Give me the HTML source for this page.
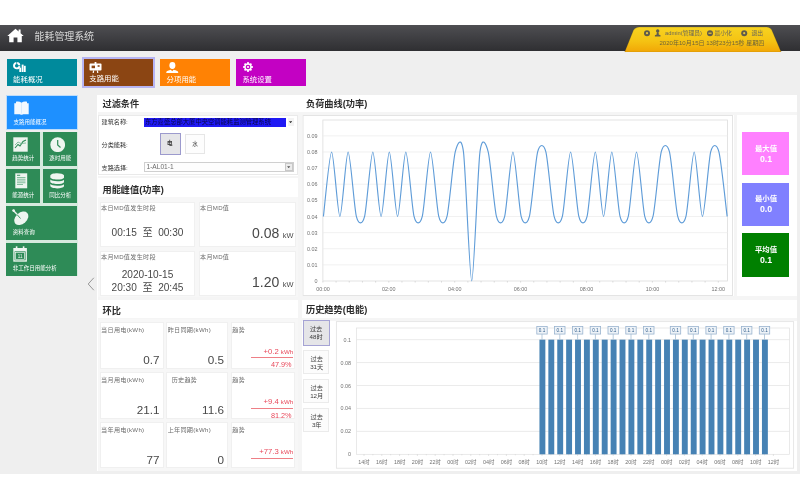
<!DOCTYPE html>
<html lang="zh-CN">
<head>
<meta charset="utf-8">
<title>能耗管理系统</title>
<style>
*{box-sizing:border-box;margin:0;padding:0}
html,body{width:800px;height:500px;overflow:hidden;background:#fff}
body{position:relative;font-family:"Liberation Sans", "Noto Sans CJK SC", sans-serif;color:#333}
.abs,.abs *{position:absolute}
#app{left:0;top:24.5px;width:800px;height:449.6px;background:#efefef;overflow:hidden}
#app,#main{filter:blur(0.35px)}
#hdr{left:0;top:0;width:800px;height:26.8px;background:linear-gradient(#4e4e52,#2f2f32)}
#title{left:34.6px;top:5.9px;font-size:10px;line-height:14px;color:#d8d8d8;white-space:nowrap;letter-spacing:-0.1px}
.tile{color:#fff;overflow:visible}
.tile .lb{white-space:nowrap;font-size:7.4px;line-height:9px;left:6.5px;top:15.4px}
.side .lb{font-size:5.5px;line-height:7px}
#panel{left:97.3px;top:70.1px;width:700px;height:376.4px;background:#fff}
.sect{font-size:9.2px;font-weight:bold;color:#2c2c2c;white-space:nowrap;line-height:12px}
.band{background:#f5f5f5}
.card{background:#fff;border:0.5px solid #f0f0f0}
.clb{font-size:6.1px;letter-spacing:0.3px;color:#6c6c6c;white-space:nowrap;line-height:8px}
.val{white-space:nowrap;color:#484848;text-align:right}
.red{color:#e8485a;white-space:nowrap;text-align:right;font-size:7.7px;line-height:9px}
.flb{font-size:6.15px;color:#333;white-space:nowrap;line-height:8px}
.btn{background:#fcfcfc;border:0.6px solid #ebebeb;font-size:6.2px;line-height:8.2px;color:#3a3a3a;text-align:center}
svg text.ax{font-family:"Liberation Sans", "Noto Sans CJK SC", sans-serif;font-size:5.4px;fill:#727272}
.st{width:48px;text-align:center;color:#fff;font-weight:bold;font-size:7.4px;line-height:10px}
svg text.bl{font-family:"Liberation Sans", "Noto Sans CJK SC", sans-serif;font-size:4.6px;fill:#2c5a88}
</style>
</head>
<body>
<div id="app" class="abs">
  <div id="hdr">
    <svg style="left:6.5px;top:3px" width="17" height="15" viewBox="0 0 17 15"><path d="M8.5 0.8 L0.3 8 L2.2 8 L2.2 14.3 L6.6 14.3 L6.6 9.6 L10.4 9.6 L10.4 14.3 L14.8 14.3 L14.8 8 L16.7 8 L13.6 5.3 L13.6 1.6 L11.6 1.6 L11.6 3.5 Z" fill="#fff"/></svg>
    <div id="title">能耗管理系统</div>
    <svg style="left:620px;top:0" width="180" height="27" viewBox="0 0 180 27">
      <defs><linearGradient id="yg" x1="0" y1="0" x2="0" y2="1"><stop offset="0" stop-color="#f7d321"/><stop offset="0.55" stop-color="#f5c313"/><stop offset="1" stop-color="#f1a606"/></linearGradient></defs>
      <path d="M4.600 27.200 L13.300 5.500 Q15 2 19.500 2 L146.500 2 Q150.500 2 152 5.500 L161.200 27.200 Z" fill="url(#yg)" stroke="#3a3320" stroke-opacity="0.35" stroke-width="0.600"/>
      <g fill="#5f5b4c">
        <circle cx="27" cy="8.200" r="3"/><circle cx="27" cy="8.200" r="1.100" fill="#e9c63a"/>
        <path d="M37.700 4.300 a1.700 1.700 0 1 1 -0.010 0 Z M34.900 11.400 L40.500 11.400 L40.500 10.200 L38.700 9.500 L38.700 7.800 L36.700 7.800 L36.700 9.500 L34.900 10.200 Z"/>
        <circle cx="90" cy="8.200" r="3"/><rect x="88.400" y="7.600" width="3.200" height="1.200" fill="#e9c63a"/>
        <circle cx="124.200" cy="8.200" r="3"/><circle cx="124.200" cy="8.200" r="1.100" fill="#e9c63a"/>
      </g>
    </svg>
    <div style="left:665px;top:4.500px;font-size:5.800px;line-height:8px;color:#6b6657;white-space:nowrap">admin(管理员)</div>
    <div style="left:714.500px;top:4.500px;font-size:5.800px;line-height:8px;color:#6b6657;white-space:nowrap">最小化</div>
    <div style="left:751.500px;top:4.500px;font-size:5.800px;line-height:8px;color:#6b6657;white-space:nowrap">退出</div>
    <div style="left:659.500px;top:14.400px;font-size:6.050px;line-height:8px;color:#6f6338;white-space:nowrap">2020年10月15日 13时23分15秒 星期四</div>
  </div>

  <!-- top tiles -->
  <div class="tile" style="left:6.600px;top:34.700px;width:70.400px;height:27px;background:#008a9c">
    <svg style="left:6.500px;top:2.800px" width="13" height="10.500" viewBox="0 0 13 10.500"><circle cx="3.700" cy="3.700" r="2.700" fill="none" stroke="#fff" stroke-width="1.900"/><path d="M3.700 3.700 L3.700 -0.500 M3.700 3.700 L8 3.700" stroke="#008a9c" stroke-width="0.800"/><rect x="6.300" y="5.600" width="1.900" height="4.700" fill="#fff"/><rect x="8.700" y="2.600" width="1.900" height="7.700" fill="#fff"/><rect x="11" y="3.800" width="1.700" height="6.500" fill="#fff"/></svg>
    <div class="lb">能耗概况</div>
  </div>
  <div class="tile" style="left:81.500px;top:32.200px;width:73.800px;height:31.800px;background:#8b4513;border:2.400px solid #b7b5f3">
    <svg style="left:5.300px;top:3px" width="13" height="11.500" viewBox="0 0 13 11.500"><rect x="0.500" y="1.600" width="12" height="7" rx="0.800" fill="#fff"/><rect x="5.600" y="0" width="1.800" height="2" fill="#fff"/><rect x="2.600" y="3.600" width="3.400" height="2.600" fill="#8b4513"/><rect x="8.600" y="3.200" width="2" height="1.600" fill="#8b4513"/><path d="M4 8.500 L3.600 11.400 L4.800 11.400 L5.200 8.500 Z M7.800 8.500 L8.200 11.400 L9.400 11.400 L9 8.500 Z" fill="#fff"/></svg>
    <div class="lb" style="left:5.800px;top:15.500px">支路用能</div>
  </div>
  <div class="tile" style="left:160.100px;top:34.700px;width:70.200px;height:27px;background:#ff8204">
    <svg style="left:6px;top:2.500px" width="12.500" height="11.500" viewBox="0 0 12.500 11.500"><ellipse cx="6.400" cy="3.500" rx="3" ry="3.400" fill="#fff"/><path d="M0.300 11.300 L0.300 10.300 C0.300 8.800 3 8.300 4.800 7.800 L6.200 9.300 L7.600 7.800 C9.400 8.300 12.200 8.800 12.200 10.300 L12.200 11.300 Z" fill="#fff"/></svg>
    <div class="lb">分项用能</div>
  </div>
  <div class="tile" style="left:236.200px;top:34.700px;width:70.300px;height:27px;background:#c301c3">
    <svg style="left:7.300px;top:3px" width="10" height="10" viewBox="-5 -5 10 10"><g fill="#fff"><circle r="3.700"/><g id="t"><rect x="-0.900" y="-4.900" width="1.800" height="9.800"/></g><use href="#t" transform="rotate(45)"/><use href="#t" transform="rotate(90)"/><use href="#t" transform="rotate(135)"/></g><circle r="2.300" fill="#c301c3"/><circle r="1.100" fill="#fff"/></svg>
    <div class="lb" style="left:6.200px">系统设置</div>
  </div>

  <!-- side tiles -->
  <div class="tile side" style="left:5.500px;top:70.700px;width:72.200px;height:35px;background:#1e90ff;border:0.700px solid #bcdcfb">
    <svg style="left:7.200px;top:5.100px" width="15" height="14" viewBox="0 0 15 14"><path d="M0.300 2.300 L2 2.300 L2 0.800 C4 0.300 6 0.600 7.500 1.800 C9 0.600 11 0.300 13 0.800 L13 2.300 L14.700 2.300 L14.700 13.200 L9 13.200 L8.300 13.800 L6.700 13.800 L6 13.200 L0.300 13.200 Z" fill="#fff" opacity="0.950"/><rect x="7.250" y="2" width="0.500" height="10.500" fill="#bcdcfb"/></svg>
    <div class="lb" style="left:7px;top:23.100px">支路用能概况</div>
  </div>
  <div style="left:5.500px;top:107.300px;width:72.100px;height:144.700px;background:#d6eade"></div>
  <div class="tile side" style="left:6.1px;top:107.8px;width:33.8px;height:33.6px;background:#2e8b57;box-shadow:none"><svg style="left:7.200px;top:4.800px" width="15" height="15" viewBox="0 0 15 15"><rect x="0.300" y="0.300" width="14.400" height="14.400" fill="#eef5f0"/><path d="M2 11 L5 7.500 L7 9 L10 4.500 L13 3" fill="none" stroke="#2e8b57" stroke-width="1.100"/><path d="M2 8 L5 5 L8 6.500 L13 6" fill="none" stroke="#6ab08a" stroke-width="0.800"/></svg><div class="lb" style="left:6.2px;top:22.500px">趋势统计</div></div>
  <div class="tile side" style="left:43.1px;top:107.8px;width:33.9px;height:33.6px;background:#2e8b57;box-shadow:none"><svg style="left:6.700px;top:4.800px" width="15.400" height="15.400" viewBox="0 0 15.400 15.400"><circle cx="7.700" cy="7.700" r="7.400" fill="#eef5f0"/><path d="M7.700 3 L7.700 8 L10.500 10.500" fill="none" stroke="#2e8b57" stroke-width="1.200"/></svg><div class="lb" style="left:6.2px;top:22.500px">逐时用能</div></div>
  <div class="tile side" style="left:6.1px;top:144.7px;width:33.8px;height:33.6px;background:#2e8b57;box-shadow:none"><svg style="left:9px;top:4.300px" width="12.500" height="15.600" viewBox="0 0 12.500 15.600"><rect x="0.300" y="0.300" width="11.900" height="15" fill="#eef5f0"/><rect x="2" y="1.800" width="3.200" height="0.900" fill="#2e8b57"/><g fill="#6ab08a"><rect x="2" y="4" width="8.500" height="0.800"/><rect x="2" y="5.800" width="8.500" height="0.800"/><rect x="2" y="7.600" width="8.500" height="0.800"/><rect x="2" y="9.400" width="8.500" height="0.800"/><rect x="2" y="11.200" width="6" height="0.800"/></g></svg><div class="lb" style="left:6.2px;top:22.500px">能源统计</div></div>
  <div class="tile side" style="left:43.1px;top:144.7px;width:33.9px;height:33.6px;background:#2e8b57;box-shadow:none"><svg style="left:7px;top:4.300px" width="14.400" height="15.600" viewBox="0 0 14.400 15.600"><g fill="#eef5f0"><path d="M0.300 2.800 C0.300 -0.500 14.100 -0.500 14.100 2.800 L14.100 4.300 C14.100 7.300 0.300 7.300 0.300 4.300 Z"/><path d="M0.300 6.600 C2 8.800 12.400 8.800 14.100 6.600 L14.100 8.800 C14.100 11.800 0.300 11.800 0.300 8.800 Z"/><path d="M0.300 11.100 C2 13.300 12.400 13.300 14.100 11.100 L14.100 12.800 C14.100 16.300 0.300 16.300 0.300 12.800 Z"/></g></svg><div class="lb" style="left:6.2px;top:22.500px">同比分析</div></div>
  <div class="tile side" style="left:6.1px;top:181.5px;width:70.9px;height:33.6px;background:#2e8b57;box-shadow:none"><svg style="left:6px;top:3.300px" width="17" height="16.500" viewBox="0 0 17 16.500"><ellipse cx="9.300" cy="9.300" rx="8" ry="5.600" transform="rotate(-42 9.300 9.300)" fill="#eef5f0"/><path d="M1 1 L7.500 8" stroke="#eef5f0" stroke-width="1.400"/><circle cx="1.600" cy="1.600" r="1.300" fill="#eef5f0"/><path d="M5 5.500 L8.500 9.500" stroke="#2e8b57" stroke-width="0.900"/></svg><div class="lb" style="left:6.6px;top:22.500px">资料查询</div></div>
  <div class="tile side" style="left:6.1px;top:218.1px;width:70.9px;height:33.4px;background:#2e8b57;box-shadow:none"><svg style="left:7.200px;top:3.700px" width="14.200" height="16" viewBox="0 0 14.200 16"><path d="M0.300 2 L13.900 2 L13.900 15.700 L0.300 15.700 Z" fill="#eef5f0"/><rect x="1.600" y="5.300" width="11" height="9" fill="#2e8b57"/><rect x="2.600" y="6.300" width="9" height="7" fill="#2e8b57" stroke="#eef5f0" stroke-width="0.700"/><rect x="2.800" y="0.300" width="1.600" height="3.200" fill="#eef5f0"/><rect x="9.800" y="0.300" width="1.600" height="3.200" fill="#eef5f0"/><text x="7.100" y="12" font-size="4.500" text-anchor="middle" fill="#eef5f0" font-family="Liberation Sans, sans-serif">11</text></svg><div class="lb" style="left:6.6px;top:22.500px">非工作日用能分析</div></div>

  <svg style="left:87px;top:252.500px" width="8" height="14" viewBox="0 0 8 14"><path d="M6.800 0.800 L1.200 7 L6.800 13.200" fill="none" stroke="#8d8d8d" stroke-width="0.900"/></svg>

  <div id="panel"></div>
</div>

<!-- main content (page coords) -->
<div class="abs" id="main" style="left:0;top:0;width:800px;height:500px">
  <!-- separator bands -->
  <div class="band" style="left:97.500px;top:111.500px;width:699.500px;height:3px"></div>
  <div class="band" style="left:298.400px;top:111.500px;width:3.500px;height:359.500px"></div>
  <div class="band" style="left:97.500px;top:175.800px;width:200px;height:2.400px"></div>
  <div class="band" style="left:97.500px;top:296px;width:699.500px;height:3.500px"></div>
  <div class="band" style="left:97.500px;top:318.200px;width:699.500px;height:2.600px"></div>
  <div class="band" style="left:97.500px;top:197.300px;width:200px;height:100px;background:#f7f7f7"></div>
  <div class="band" style="left:97.500px;top:319px;width:200px;height:152px;background:#f7f7f7"></div>
  <div class="band" style="left:733.800px;top:114px;width:3.200px;height:183px"></div>

  <div class="sect" style="left:102.500px;top:98px">过滤条件</div>
  <div class="sect" style="left:306px;top:98px">负荷曲线(功率)</div>
  <div class="sect" style="left:102.500px;top:183.500px">用能峰值(功率)</div>
  <div class="sect" style="left:102.500px;top:304.700px">环比</div>
  <div class="sect" style="left:306px;top:304.200px">历史趋势(电能)</div>

  <!-- filter -->
  <div style="left:98.300px;top:114.600px;width:199.600px;height:60.700px;border:0.600px solid #eaeaea;background:#fff"></div>
  <div class="flb" style="left:101.500px;top:118.200px">建筑名称:</div>
  <div style="left:143.500px;top:117.600px;width:142px;height:9px;background:#1f19f4;overflow:hidden"><span style="left:1.500px;top:0.500px;font-size:6.300px;line-height:8px;color:#08084a;white-space:nowrap">东方嘉盛总部大厦中央空调能耗监测管理系统</span></div>
  <div style="left:287.700px;top:118.300px;width:6.300px;height:7.600px;background:#f3f3f3"></div><svg style="left:289.300px;top:120.900px" width="3.200" height="2.400" viewBox="0 0 4 3"><path d="M0 0.300 L4 0.300 L2 2.800 Z" fill="#333"/></svg>
  <div class="flb" style="left:101.500px;top:140.500px">分类能耗:</div>
  <div style="left:159.800px;top:133.200px;width:21.500px;height:21.700px;background:#e5e5e8;border:1.800px solid #9c9acd"><span style="left:0;top:5.600px;width:17.900px;font-weight:bold;text-align:center;font-size:5.600px;line-height:7px;color:#333">电</span></div>
  <div style="left:185px;top:134px;width:19.500px;height:20.300px;background:#fdfdfd;border:0.600px solid #e6e6e6"><span style="left:0;top:5.600px;width:18.300px;text-align:center;font-size:5.600px;line-height:7px;color:#444">水</span></div>
  <div class="flb" style="left:101.500px;top:163.700px">支路选择:</div>
  <div style="left:143.500px;top:161.800px;width:150.700px;height:10.200px;background:#fdfdfd;border:0.700px solid #cfcfcf"><span style="left:2px;top:0.500px;font-size:6.600px;line-height:8px;color:#6a6a6a;white-space:nowrap">1-AL01-1</span>
    <div style="right:0.300px;top:0.400px;width:8px;height:8px;background:#ebebeb;border:0.500px solid #c8c8c8"></div>
    <svg style="right:2.600px;top:3.300px" width="3.400" height="2.400" viewBox="0 0 4 3"><path d="M0 0.300 L4 0.300 L2 2.800 Z" fill="#555"/></svg>
  </div>

  <!-- peak cards -->
  <div class="card" style="left:99.600px;top:201.500px;width:95.800px;height:45.700px"></div>
  <div class="card" style="left:198.500px;top:201.500px;width:97.800px;height:45.700px"></div>
  <div class="card" style="left:99.600px;top:250.500px;width:95.800px;height:45.700px"></div>
  <div class="card" style="left:198.500px;top:250.500px;width:97.800px;height:45.700px"></div>
  <div class="clb" style="left:101px;top:204px">本日MD值发生时段</div>
  <div class="clb" style="left:200px;top:204px">本日MD值</div>
  <div class="clb" style="left:101px;top:253px">本月MD值发生时段</div>
  <div class="clb" style="left:200px;top:253px">本月MD值</div>
  <div class="val" style="left:99.600px;top:227px;width:95.800px;text-align:center;font-size:10.100px;line-height:12px">00:15&nbsp; 至 &nbsp;00:30</div>
  <div class="val" style="left:99.600px;top:269px;width:95.800px;text-align:center;font-size:10.100px;line-height:12px">2020-10-15</div>
  <div class="val" style="left:99.600px;top:281.700px;width:95.800px;text-align:center;font-size:10.100px;line-height:12px">20:30&nbsp; 至 &nbsp;20:45</div>
  <div class="val" style="left:198.500px;top:224.700px;width:95px;font-size:14px;line-height:16px">0.08<span style="position:static;font-size:7.400px;margin-left:1.500px"> kW</span></div>
  <div class="val" style="left:198.500px;top:274px;width:95px;font-size:14px;line-height:16px">1.20<span style="position:static;font-size:7.400px;margin-left:1.500px"> kW</span></div>

  <!-- huanbi cards -->
  <div class="card" style="left:99.8px;top:322.0px;width:64.2px;height:46.7px"></div>
  <div class="clb" style="left:101.1px;top:325.6px">当日用电(kWh)</div>
  <div class="val" style="left:99.8px;top:352.5px;width:59.8px;font-size:11.700px;line-height:13px">0.7</div>
  <div class="card" style="left:166.4px;top:322.0px;width:62.0px;height:46.7px"></div>
  <div class="clb" style="left:167.7px;top:325.6px">昨日同期(kWh)</div>
  <div class="val" style="left:166.4px;top:352.5px;width:57.6px;font-size:11.700px;line-height:13px">0.5</div>
  <div class="card" style="left:231.0px;top:322.0px;width:64.4px;height:46.7px"></div>
  <div class="clb" style="left:232.3px;top:325.6px">趋势</div>
  <div class="red" style="left:231.0px;top:347.0px;width:62.2px">+0.2 <span style="position:static;font-size:6.200px">kWh</span></div>
  <div style="left:250.9px;top:357.3px;width:42.500px;height:0.600px;background:#ee7f86"></div>
  <div class="red" style="font-size:7.3px;left:231.0px;top:360.3px;width:60.6px">47.9%</div>
  <div class="card" style="left:99.8px;top:372.3px;width:64.2px;height:46.9px"></div>
  <div class="clb" style="left:101.1px;top:375.9px">当月用电(kWh)</div>
  <div class="val" style="left:99.8px;top:402.8px;width:59.8px;font-size:11.700px;line-height:13px">21.1</div>
  <div class="card" style="left:166.4px;top:372.3px;width:62.0px;height:46.9px"></div>
  <div class="clb" style="left:167.7px;top:375.9px">&nbsp;&nbsp;历史趋势</div>
  <div class="val" style="left:166.4px;top:402.8px;width:57.6px;font-size:11.700px;line-height:13px">11.6</div>
  <div class="card" style="left:231.0px;top:372.3px;width:64.4px;height:46.9px"></div>
  <div class="clb" style="left:232.3px;top:375.9px">趋势</div>
  <div class="red" style="left:231.0px;top:397.3px;width:62.2px">+9.4 <span style="position:static;font-size:6.200px">kWh</span></div>
  <div style="left:250.9px;top:407.6px;width:42.500px;height:0.600px;background:#ee7f86"></div>
  <div class="red" style="font-size:7.3px;left:231.0px;top:410.6px;width:60.6px">81.2%</div>
  <div class="card" style="left:99.8px;top:422.4px;width:64.2px;height:45.6px"></div>
  <div class="clb" style="left:101.1px;top:426.0px">当年用电(kWh)</div>
  <div class="val" style="left:99.8px;top:452.9px;width:59.8px;font-size:11.700px;line-height:13px">77</div>
  <div class="card" style="left:166.4px;top:422.4px;width:62.0px;height:45.6px"></div>
  <div class="clb" style="left:167.7px;top:426.0px">上年同期(kWh)</div>
  <div class="val" style="left:166.4px;top:452.9px;width:57.6px;font-size:11.700px;line-height:13px">0</div>
  <div class="card" style="left:231.0px;top:422.4px;width:64.4px;height:45.6px"></div>
  <div class="clb" style="left:232.3px;top:426.0px">趋势</div>
  <div class="red" style="left:231.0px;top:447.4px;width:62.2px">+77.3 <span style="position:static;font-size:6.200px">kWh</span></div>
  <div style="left:250.9px;top:457.7px;width:42.500px;height:0.600px;background:#ee7f86"></div>

  <!-- right stat boxes -->
  <div style="left:741.600px;top:132.400px;width:47.800px;height:42.700px;background:#ff80ff"></div>
  <div style="left:741.600px;top:183px;width:47.800px;height:43px;background:#8080ff"></div>
  <div style="left:741.600px;top:233.200px;width:47.800px;height:43.400px;background:#008000"></div>
  <div class="st" style="left:742px;top:143.500px">最大值<br><span style="position:static;font-size:8.800px">0.1</span></div>
  <div class="st" style="left:742px;top:194.200px">最小值<br><span style="position:static;font-size:8.800px">0.0</span></div>
  <div class="st" style="left:742px;top:244.700px">平均值<br><span style="position:static;font-size:8.800px">0.1</span></div>

  <!-- period buttons -->
  <div class="btn" style="left:302.800px;top:320.300px;width:27.300px;height:26px;background:#e5e5e8;border:1.300px solid #a5a3d4"><span style="left:0;top:3.700px;width:24.600px">过去<br>48时</span></div>
  <div class="btn" style="left:303.300px;top:349.500px;width:26px;height:24.500px"><span style="left:0;top:4px;width:24.800px">过去<br>31天</span></div>
  <div class="btn" style="left:303.300px;top:378.800px;width:26px;height:24.500px"><span style="left:0;top:4px;width:24.800px">过去<br>12月</span></div>
  <div class="btn" style="left:303.300px;top:407.500px;width:26px;height:24.500px"><span style="left:0;top:4px;width:24.800px">过去<br>3年</span></div>

  <svg style="left:0;top:0" width="800" height="500" viewBox="0 0 800 500">
<rect x="303" y="115.5" width="429.5" height="180" fill="#fff" stroke="#e4e4e4" stroke-width="1"/>
<rect x="322.9" y="120.0" width="404.7" height="161.0" fill="#fff" stroke="#dcdcdc" stroke-width="0.8"/>
<line x1="322.9" y1="264.87" x2="727.6" y2="264.87" stroke="#ebebeb" stroke-width="0.7"/>
<text x="317.6" y="266.97" text-anchor="end" class="ax">0.01</text>
<line x1="322.9" y1="248.74" x2="727.6" y2="248.74" stroke="#ebebeb" stroke-width="0.7"/>
<text x="317.6" y="250.84" text-anchor="end" class="ax">0.02</text>
<line x1="322.9" y1="232.61" x2="727.6" y2="232.61" stroke="#ebebeb" stroke-width="0.7"/>
<text x="317.6" y="234.71" text-anchor="end" class="ax">0.03</text>
<line x1="322.9" y1="216.48" x2="727.6" y2="216.48" stroke="#ebebeb" stroke-width="0.7"/>
<text x="317.6" y="218.58" text-anchor="end" class="ax">0.04</text>
<line x1="322.9" y1="200.35" x2="727.6" y2="200.35" stroke="#ebebeb" stroke-width="0.7"/>
<text x="317.6" y="202.45" text-anchor="end" class="ax">0.05</text>
<line x1="322.9" y1="184.22" x2="727.6" y2="184.22" stroke="#ebebeb" stroke-width="0.7"/>
<text x="317.6" y="186.32" text-anchor="end" class="ax">0.06</text>
<line x1="322.9" y1="168.09" x2="727.6" y2="168.09" stroke="#ebebeb" stroke-width="0.7"/>
<text x="317.6" y="170.19" text-anchor="end" class="ax">0.07</text>
<line x1="322.9" y1="151.96" x2="727.6" y2="151.96" stroke="#ebebeb" stroke-width="0.7"/>
<text x="317.6" y="154.06" text-anchor="end" class="ax">0.08</text>
<line x1="322.9" y1="135.83" x2="727.6" y2="135.83" stroke="#ebebeb" stroke-width="0.7"/>
<text x="317.6" y="137.93" text-anchor="end" class="ax">0.09</text>
<text x="317.6" y="283.10" text-anchor="end" class="ax">0</text>
<line x1="322.90" y1="281.0" x2="322.90" y2="282.6" stroke="#c8c8c8" stroke-width="0.6"/>
<line x1="336.08" y1="281.0" x2="336.08" y2="282.6" stroke="#c8c8c8" stroke-width="0.6"/>
<line x1="349.26" y1="281.0" x2="349.26" y2="282.6" stroke="#c8c8c8" stroke-width="0.6"/>
<line x1="362.44" y1="281.0" x2="362.44" y2="282.6" stroke="#c8c8c8" stroke-width="0.6"/>
<line x1="375.62" y1="281.0" x2="375.62" y2="282.6" stroke="#c8c8c8" stroke-width="0.6"/>
<line x1="388.80" y1="281.0" x2="388.80" y2="282.6" stroke="#c8c8c8" stroke-width="0.6"/>
<line x1="401.98" y1="281.0" x2="401.98" y2="282.6" stroke="#c8c8c8" stroke-width="0.6"/>
<line x1="415.16" y1="281.0" x2="415.16" y2="282.6" stroke="#c8c8c8" stroke-width="0.6"/>
<line x1="428.34" y1="281.0" x2="428.34" y2="282.6" stroke="#c8c8c8" stroke-width="0.6"/>
<line x1="441.52" y1="281.0" x2="441.52" y2="282.6" stroke="#c8c8c8" stroke-width="0.6"/>
<line x1="454.70" y1="281.0" x2="454.70" y2="282.6" stroke="#c8c8c8" stroke-width="0.6"/>
<line x1="467.88" y1="281.0" x2="467.88" y2="282.6" stroke="#c8c8c8" stroke-width="0.6"/>
<line x1="481.06" y1="281.0" x2="481.06" y2="282.6" stroke="#c8c8c8" stroke-width="0.6"/>
<line x1="494.24" y1="281.0" x2="494.24" y2="282.6" stroke="#c8c8c8" stroke-width="0.6"/>
<line x1="507.42" y1="281.0" x2="507.42" y2="282.6" stroke="#c8c8c8" stroke-width="0.6"/>
<line x1="520.60" y1="281.0" x2="520.60" y2="282.6" stroke="#c8c8c8" stroke-width="0.6"/>
<line x1="533.78" y1="281.0" x2="533.78" y2="282.6" stroke="#c8c8c8" stroke-width="0.6"/>
<line x1="546.96" y1="281.0" x2="546.96" y2="282.6" stroke="#c8c8c8" stroke-width="0.6"/>
<line x1="560.14" y1="281.0" x2="560.14" y2="282.6" stroke="#c8c8c8" stroke-width="0.6"/>
<line x1="573.32" y1="281.0" x2="573.32" y2="282.6" stroke="#c8c8c8" stroke-width="0.6"/>
<line x1="586.50" y1="281.0" x2="586.50" y2="282.6" stroke="#c8c8c8" stroke-width="0.6"/>
<line x1="599.68" y1="281.0" x2="599.68" y2="282.6" stroke="#c8c8c8" stroke-width="0.6"/>
<line x1="612.86" y1="281.0" x2="612.86" y2="282.6" stroke="#c8c8c8" stroke-width="0.6"/>
<line x1="626.04" y1="281.0" x2="626.04" y2="282.6" stroke="#c8c8c8" stroke-width="0.6"/>
<line x1="639.22" y1="281.0" x2="639.22" y2="282.6" stroke="#c8c8c8" stroke-width="0.6"/>
<line x1="652.40" y1="281.0" x2="652.40" y2="282.6" stroke="#c8c8c8" stroke-width="0.6"/>
<line x1="665.58" y1="281.0" x2="665.58" y2="282.6" stroke="#c8c8c8" stroke-width="0.6"/>
<line x1="678.76" y1="281.0" x2="678.76" y2="282.6" stroke="#c8c8c8" stroke-width="0.6"/>
<line x1="691.94" y1="281.0" x2="691.94" y2="282.6" stroke="#c8c8c8" stroke-width="0.6"/>
<line x1="705.12" y1="281.0" x2="705.12" y2="282.6" stroke="#c8c8c8" stroke-width="0.6"/>
<line x1="718.30" y1="281.0" x2="718.30" y2="282.6" stroke="#c8c8c8" stroke-width="0.6"/>
<text x="322.90" y="291" text-anchor="middle" class="ax">00:00</text>
<text x="388.80" y="291" text-anchor="middle" class="ax">02:00</text>
<text x="454.70" y="291" text-anchor="middle" class="ax">04:00</text>
<text x="520.60" y="291" text-anchor="middle" class="ax">06:00</text>
<text x="586.50" y="291" text-anchor="middle" class="ax">08:00</text>
<text x="652.40" y="291" text-anchor="middle" class="ax">10:00</text>
<text x="718.30" y="291" text-anchor="middle" class="ax">12:00</text>
<path d="M323.40,216.48 C324.50,207.88 329.44,151.96 331.64,151.96 C333.84,151.96 337.68,216.48 339.88,216.48 C342.08,216.48 345.92,151.96 348.12,151.96 C350.32,151.96 354.16,207.88 356.36,216.48 C358.56,225.08 362.40,225.08 364.60,216.48 C366.80,207.88 370.64,151.96 372.84,151.96 C375.04,151.96 378.88,216.48 381.08,216.48 C383.28,216.48 387.12,151.96 389.32,151.96 C391.52,151.96 395.36,216.48 397.56,216.48 C399.76,216.48 403.60,151.96 405.80,151.96 C408.00,151.96 411.84,207.88 414.04,216.48 C416.24,225.08 420.08,225.08 422.28,216.48 C424.48,207.88 428.32,151.96 430.52,151.96 C432.72,151.96 436.56,207.88 438.76,216.48 C440.96,225.08 444.80,225.08 447.00,216.48 C449.20,207.88 453.04,160.56 455.24,151.96 C457.44,143.36 461.28,134.75 463.48,151.96 C465.68,169.17 469.52,281.00 471.72,281.00 C473.92,281.00 477.76,169.17 479.96,151.96 C482.16,134.75 486.00,143.36 488.20,151.96 C490.40,160.56 494.24,207.88 496.44,216.48 C498.64,225.08 502.48,225.08 504.68,216.48 C506.88,207.88 510.72,151.96 512.92,151.96 C515.12,151.96 518.96,207.88 521.16,216.48 C523.36,225.08 527.20,225.08 529.40,216.48 C531.60,207.88 535.44,160.56 537.64,151.96 C539.84,143.36 543.68,143.36 545.88,151.96 C548.08,160.56 551.92,207.88 554.12,216.48 C556.32,225.08 560.16,225.08 562.36,216.48 C564.56,207.88 568.40,151.96 570.60,151.96 C572.80,151.96 576.64,207.88 578.84,216.48 C581.04,225.08 584.88,225.08 587.08,216.48 C589.28,207.88 593.12,151.96 595.32,151.96 C597.52,151.96 601.36,216.48 603.56,216.48 C605.76,216.48 609.60,151.96 611.80,151.96 C614.00,151.96 617.84,207.88 620.04,216.48 C622.24,225.08 626.08,225.08 628.28,216.48 C630.48,207.88 634.32,151.96 636.52,151.96 C638.72,151.96 642.56,207.88 644.76,216.48 C646.96,225.08 650.80,225.08 653.00,216.48 C655.20,207.88 659.04,160.56 661.24,151.96 C663.44,143.36 667.28,143.36 669.48,151.96 C671.68,160.56 675.52,207.88 677.72,216.48 C679.92,225.08 683.76,225.08 685.96,216.48 C688.16,207.88 692.00,151.96 694.20,151.96 C696.40,151.96 700.24,216.48 702.44,216.48 C704.64,216.48 708.48,160.56 710.68,151.96 C712.88,143.36 716.72,143.36 718.92,151.96 C721.12,160.56 726.06,207.88 727.16,216.48" fill="none" stroke="#5f9cd8" stroke-width="1.15" stroke-linejoin="round"/>
<rect x="336.4" y="321.6" width="457.2" height="146.6" fill="#fff" stroke="#e4e4e4" stroke-width="0.9"/>
<rect x="356.5" y="328.0" width="433.0" height="126.3" fill="#fff" stroke="#e0e0e0" stroke-width="0.7"/>
<text x="351" y="456.30" text-anchor="end" class="ax">0</text>
<line x1="356.5" y1="431.37" x2="789.5" y2="431.37" stroke="#e6e6e6" stroke-width="0.8"/>
<text x="351" y="433.37" text-anchor="end" class="ax">0.02</text>
<line x1="356.5" y1="408.44" x2="789.5" y2="408.44" stroke="#e6e6e6" stroke-width="0.8"/>
<text x="351" y="410.44" text-anchor="end" class="ax">0.04</text>
<line x1="356.5" y1="385.51" x2="789.5" y2="385.51" stroke="#e6e6e6" stroke-width="0.8"/>
<text x="351" y="387.51" text-anchor="end" class="ax">0.06</text>
<line x1="356.5" y1="362.58" x2="789.5" y2="362.58" stroke="#e6e6e6" stroke-width="0.8"/>
<text x="351" y="364.58" text-anchor="end" class="ax">0.08</text>
<line x1="356.5" y1="339.65" x2="789.5" y2="339.65" stroke="#e6e6e6" stroke-width="0.8"/>
<text x="351" y="341.65" text-anchor="end" class="ax">0.1</text>
<line x1="364.00" y1="454.3" x2="364.00" y2="455.9" stroke="#c4c4c4" stroke-width="0.5"/>
<text x="364.00" y="464" text-anchor="middle" class="ax">14时</text>
<line x1="372.90" y1="454.3" x2="372.90" y2="455.3" stroke="#c4c4c4" stroke-width="0.5"/>
<line x1="381.80" y1="454.3" x2="381.80" y2="455.9" stroke="#c4c4c4" stroke-width="0.5"/>
<text x="381.80" y="464" text-anchor="middle" class="ax">16时</text>
<line x1="390.70" y1="454.3" x2="390.70" y2="455.3" stroke="#c4c4c4" stroke-width="0.5"/>
<line x1="399.60" y1="454.3" x2="399.60" y2="455.9" stroke="#c4c4c4" stroke-width="0.5"/>
<text x="399.60" y="464" text-anchor="middle" class="ax">18时</text>
<line x1="408.50" y1="454.3" x2="408.50" y2="455.3" stroke="#c4c4c4" stroke-width="0.5"/>
<line x1="417.40" y1="454.3" x2="417.40" y2="455.9" stroke="#c4c4c4" stroke-width="0.5"/>
<text x="417.40" y="464" text-anchor="middle" class="ax">20时</text>
<line x1="426.30" y1="454.3" x2="426.30" y2="455.3" stroke="#c4c4c4" stroke-width="0.5"/>
<line x1="435.20" y1="454.3" x2="435.20" y2="455.9" stroke="#c4c4c4" stroke-width="0.5"/>
<text x="435.20" y="464" text-anchor="middle" class="ax">22时</text>
<line x1="444.10" y1="454.3" x2="444.10" y2="455.3" stroke="#c4c4c4" stroke-width="0.5"/>
<line x1="453.00" y1="454.3" x2="453.00" y2="455.9" stroke="#c4c4c4" stroke-width="0.5"/>
<text x="453.00" y="464" text-anchor="middle" class="ax">00时</text>
<line x1="461.90" y1="454.3" x2="461.90" y2="455.3" stroke="#c4c4c4" stroke-width="0.5"/>
<line x1="470.80" y1="454.3" x2="470.80" y2="455.9" stroke="#c4c4c4" stroke-width="0.5"/>
<text x="470.80" y="464" text-anchor="middle" class="ax">02时</text>
<line x1="479.70" y1="454.3" x2="479.70" y2="455.3" stroke="#c4c4c4" stroke-width="0.5"/>
<line x1="488.60" y1="454.3" x2="488.60" y2="455.9" stroke="#c4c4c4" stroke-width="0.5"/>
<text x="488.60" y="464" text-anchor="middle" class="ax">04时</text>
<line x1="497.50" y1="454.3" x2="497.50" y2="455.3" stroke="#c4c4c4" stroke-width="0.5"/>
<line x1="506.40" y1="454.3" x2="506.40" y2="455.9" stroke="#c4c4c4" stroke-width="0.5"/>
<text x="506.40" y="464" text-anchor="middle" class="ax">06时</text>
<line x1="515.30" y1="454.3" x2="515.30" y2="455.3" stroke="#c4c4c4" stroke-width="0.5"/>
<line x1="524.20" y1="454.3" x2="524.20" y2="455.9" stroke="#c4c4c4" stroke-width="0.5"/>
<text x="524.20" y="464" text-anchor="middle" class="ax">08时</text>
<line x1="533.10" y1="454.3" x2="533.10" y2="455.3" stroke="#c4c4c4" stroke-width="0.5"/>
<line x1="542.00" y1="454.3" x2="542.00" y2="455.9" stroke="#c4c4c4" stroke-width="0.5"/>
<text x="542.00" y="464" text-anchor="middle" class="ax">10时</text>
<line x1="550.90" y1="454.3" x2="550.90" y2="455.3" stroke="#c4c4c4" stroke-width="0.5"/>
<line x1="559.80" y1="454.3" x2="559.80" y2="455.9" stroke="#c4c4c4" stroke-width="0.5"/>
<text x="559.80" y="464" text-anchor="middle" class="ax">12时</text>
<line x1="568.70" y1="454.3" x2="568.70" y2="455.3" stroke="#c4c4c4" stroke-width="0.5"/>
<line x1="577.60" y1="454.3" x2="577.60" y2="455.9" stroke="#c4c4c4" stroke-width="0.5"/>
<text x="577.60" y="464" text-anchor="middle" class="ax">14时</text>
<line x1="586.50" y1="454.3" x2="586.50" y2="455.3" stroke="#c4c4c4" stroke-width="0.5"/>
<line x1="595.40" y1="454.3" x2="595.40" y2="455.9" stroke="#c4c4c4" stroke-width="0.5"/>
<text x="595.40" y="464" text-anchor="middle" class="ax">16时</text>
<line x1="604.30" y1="454.3" x2="604.30" y2="455.3" stroke="#c4c4c4" stroke-width="0.5"/>
<line x1="613.20" y1="454.3" x2="613.20" y2="455.9" stroke="#c4c4c4" stroke-width="0.5"/>
<text x="613.20" y="464" text-anchor="middle" class="ax">18时</text>
<line x1="622.10" y1="454.3" x2="622.10" y2="455.3" stroke="#c4c4c4" stroke-width="0.5"/>
<line x1="631.00" y1="454.3" x2="631.00" y2="455.9" stroke="#c4c4c4" stroke-width="0.5"/>
<text x="631.00" y="464" text-anchor="middle" class="ax">20时</text>
<line x1="639.90" y1="454.3" x2="639.90" y2="455.3" stroke="#c4c4c4" stroke-width="0.5"/>
<line x1="648.80" y1="454.3" x2="648.80" y2="455.9" stroke="#c4c4c4" stroke-width="0.5"/>
<text x="648.80" y="464" text-anchor="middle" class="ax">22时</text>
<line x1="657.70" y1="454.3" x2="657.70" y2="455.3" stroke="#c4c4c4" stroke-width="0.5"/>
<line x1="666.60" y1="454.3" x2="666.60" y2="455.9" stroke="#c4c4c4" stroke-width="0.5"/>
<text x="666.60" y="464" text-anchor="middle" class="ax">00时</text>
<line x1="675.50" y1="454.3" x2="675.50" y2="455.3" stroke="#c4c4c4" stroke-width="0.5"/>
<line x1="684.40" y1="454.3" x2="684.40" y2="455.9" stroke="#c4c4c4" stroke-width="0.5"/>
<text x="684.40" y="464" text-anchor="middle" class="ax">02时</text>
<line x1="693.30" y1="454.3" x2="693.30" y2="455.3" stroke="#c4c4c4" stroke-width="0.5"/>
<line x1="702.20" y1="454.3" x2="702.20" y2="455.9" stroke="#c4c4c4" stroke-width="0.5"/>
<text x="702.20" y="464" text-anchor="middle" class="ax">04时</text>
<line x1="711.10" y1="454.3" x2="711.10" y2="455.3" stroke="#c4c4c4" stroke-width="0.5"/>
<line x1="720.00" y1="454.3" x2="720.00" y2="455.9" stroke="#c4c4c4" stroke-width="0.5"/>
<text x="720.00" y="464" text-anchor="middle" class="ax">06时</text>
<line x1="728.90" y1="454.3" x2="728.90" y2="455.3" stroke="#c4c4c4" stroke-width="0.5"/>
<line x1="737.80" y1="454.3" x2="737.80" y2="455.9" stroke="#c4c4c4" stroke-width="0.5"/>
<text x="737.80" y="464" text-anchor="middle" class="ax">08时</text>
<line x1="746.70" y1="454.3" x2="746.70" y2="455.3" stroke="#c4c4c4" stroke-width="0.5"/>
<line x1="755.60" y1="454.3" x2="755.60" y2="455.9" stroke="#c4c4c4" stroke-width="0.5"/>
<text x="755.60" y="464" text-anchor="middle" class="ax">10时</text>
<line x1="764.50" y1="454.3" x2="764.50" y2="455.3" stroke="#c4c4c4" stroke-width="0.5"/>
<line x1="773.40" y1="454.3" x2="773.40" y2="455.9" stroke="#c4c4c4" stroke-width="0.5"/>
<text x="773.40" y="464" text-anchor="middle" class="ax">12时</text>
<rect x="539.45" y="339.65" width="5.9" height="114.65" fill="#4682b4"/>
<rect x="548.35" y="339.65" width="5.9" height="114.65" fill="#4682b4"/>
<rect x="557.25" y="339.65" width="5.9" height="114.65" fill="#4682b4"/>
<rect x="566.15" y="339.65" width="5.9" height="114.65" fill="#4682b4"/>
<rect x="575.05" y="339.65" width="5.9" height="114.65" fill="#4682b4"/>
<rect x="583.95" y="339.65" width="5.9" height="114.65" fill="#4682b4"/>
<rect x="592.85" y="339.65" width="5.9" height="114.65" fill="#4682b4"/>
<rect x="601.75" y="339.65" width="5.9" height="114.65" fill="#4682b4"/>
<rect x="610.65" y="339.65" width="5.9" height="114.65" fill="#4682b4"/>
<rect x="619.55" y="339.65" width="5.9" height="114.65" fill="#4682b4"/>
<rect x="628.45" y="339.65" width="5.9" height="114.65" fill="#4682b4"/>
<rect x="637.35" y="339.65" width="5.9" height="114.65" fill="#4682b4"/>
<rect x="646.25" y="339.65" width="5.9" height="114.65" fill="#4682b4"/>
<rect x="655.15" y="339.65" width="5.9" height="114.65" fill="#4682b4"/>
<rect x="664.05" y="339.65" width="5.9" height="114.65" fill="#4682b4"/>
<rect x="672.95" y="339.65" width="5.9" height="114.65" fill="#4682b4"/>
<rect x="681.85" y="339.65" width="5.9" height="114.65" fill="#4682b4"/>
<rect x="690.75" y="339.65" width="5.9" height="114.65" fill="#4682b4"/>
<rect x="699.65" y="339.65" width="5.9" height="114.65" fill="#4682b4"/>
<rect x="708.55" y="339.65" width="5.9" height="114.65" fill="#4682b4"/>
<rect x="717.45" y="339.65" width="5.9" height="114.65" fill="#4682b4"/>
<rect x="726.35" y="339.65" width="5.9" height="114.65" fill="#4682b4"/>
<rect x="735.25" y="339.65" width="5.9" height="114.65" fill="#4682b4"/>
<rect x="744.15" y="339.65" width="5.9" height="114.65" fill="#4682b4"/>
<rect x="753.05" y="339.65" width="5.9" height="114.65" fill="#4682b4"/>
<rect x="761.95" y="339.65" width="5.9" height="114.65" fill="#4682b4"/>
<line x1="542.00" y1="334.15" x2="542.00" y2="339.65" stroke="#9ab4cf" stroke-width="0.7"/>
<rect x="536.80" y="326.45" width="10.4" height="7.6" fill="#eef3f8" stroke="#9ab4cf" stroke-width="0.8"/>
<text x="542.00" y="332.35" text-anchor="middle" class="bl">0.1</text>
<line x1="559.80" y1="334.15" x2="559.80" y2="339.65" stroke="#9ab4cf" stroke-width="0.7"/>
<rect x="554.60" y="326.45" width="10.4" height="7.6" fill="#eef3f8" stroke="#9ab4cf" stroke-width="0.8"/>
<text x="559.80" y="332.35" text-anchor="middle" class="bl">0.1</text>
<line x1="577.60" y1="334.15" x2="577.60" y2="339.65" stroke="#9ab4cf" stroke-width="0.7"/>
<rect x="572.40" y="326.45" width="10.4" height="7.6" fill="#eef3f8" stroke="#9ab4cf" stroke-width="0.8"/>
<text x="577.60" y="332.35" text-anchor="middle" class="bl">0.1</text>
<line x1="595.40" y1="334.15" x2="595.40" y2="339.65" stroke="#9ab4cf" stroke-width="0.7"/>
<rect x="590.20" y="326.45" width="10.4" height="7.6" fill="#eef3f8" stroke="#9ab4cf" stroke-width="0.8"/>
<text x="595.40" y="332.35" text-anchor="middle" class="bl">0.1</text>
<line x1="613.20" y1="334.15" x2="613.20" y2="339.65" stroke="#9ab4cf" stroke-width="0.7"/>
<rect x="608.00" y="326.45" width="10.4" height="7.6" fill="#eef3f8" stroke="#9ab4cf" stroke-width="0.8"/>
<text x="613.20" y="332.35" text-anchor="middle" class="bl">0.1</text>
<line x1="631.00" y1="334.15" x2="631.00" y2="339.65" stroke="#9ab4cf" stroke-width="0.7"/>
<rect x="625.80" y="326.45" width="10.4" height="7.6" fill="#eef3f8" stroke="#9ab4cf" stroke-width="0.8"/>
<text x="631.00" y="332.35" text-anchor="middle" class="bl">0.1</text>
<line x1="648.80" y1="334.15" x2="648.80" y2="339.65" stroke="#9ab4cf" stroke-width="0.7"/>
<rect x="643.60" y="326.45" width="10.4" height="7.6" fill="#eef3f8" stroke="#9ab4cf" stroke-width="0.8"/>
<text x="648.80" y="332.35" text-anchor="middle" class="bl">0.1</text>
<line x1="675.50" y1="334.15" x2="675.50" y2="339.65" stroke="#9ab4cf" stroke-width="0.7"/>
<rect x="670.30" y="326.45" width="10.4" height="7.6" fill="#eef3f8" stroke="#9ab4cf" stroke-width="0.8"/>
<text x="675.50" y="332.35" text-anchor="middle" class="bl">0.1</text>
<line x1="693.30" y1="334.15" x2="693.30" y2="339.65" stroke="#9ab4cf" stroke-width="0.7"/>
<rect x="688.10" y="326.45" width="10.4" height="7.6" fill="#eef3f8" stroke="#9ab4cf" stroke-width="0.8"/>
<text x="693.30" y="332.35" text-anchor="middle" class="bl">0.1</text>
<line x1="711.10" y1="334.15" x2="711.10" y2="339.65" stroke="#9ab4cf" stroke-width="0.7"/>
<rect x="705.90" y="326.45" width="10.4" height="7.6" fill="#eef3f8" stroke="#9ab4cf" stroke-width="0.8"/>
<text x="711.10" y="332.35" text-anchor="middle" class="bl">0.1</text>
<line x1="728.90" y1="334.15" x2="728.90" y2="339.65" stroke="#9ab4cf" stroke-width="0.7"/>
<rect x="723.70" y="326.45" width="10.4" height="7.6" fill="#eef3f8" stroke="#9ab4cf" stroke-width="0.8"/>
<text x="728.90" y="332.35" text-anchor="middle" class="bl">0.1</text>
<line x1="746.70" y1="334.15" x2="746.70" y2="339.65" stroke="#9ab4cf" stroke-width="0.7"/>
<rect x="741.50" y="326.45" width="10.4" height="7.6" fill="#eef3f8" stroke="#9ab4cf" stroke-width="0.8"/>
<text x="746.70" y="332.35" text-anchor="middle" class="bl">0.1</text>
<line x1="764.50" y1="334.15" x2="764.50" y2="339.65" stroke="#9ab4cf" stroke-width="0.7"/>
<rect x="759.30" y="326.45" width="10.4" height="7.6" fill="#eef3f8" stroke="#9ab4cf" stroke-width="0.8"/>
<text x="764.50" y="332.35" text-anchor="middle" class="bl">0.1</text>
  </svg>
</div>
</body>
</html>
